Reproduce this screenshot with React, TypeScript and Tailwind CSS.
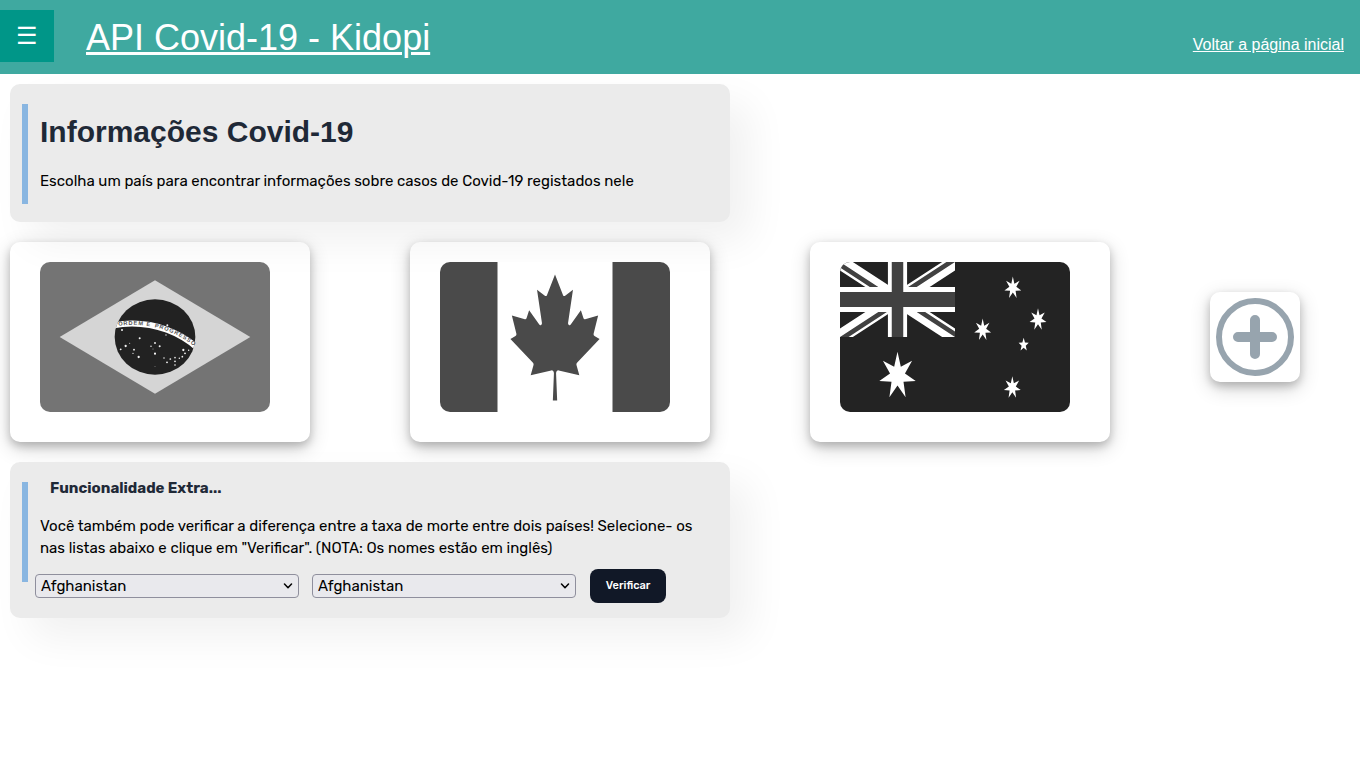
import React from "react";

const FLAG = "h-[150px] w-[230px] rounded-[10px]";

function starPoints(cx: number, cy: number, rx: number, ry: number, tips: number) {
  const points: string[] = [];
  for (let i = 0; i < tips * 2; i++) {
    const k = i % 2 === 0 ? 1 : 0.41;
    const a = (Math.PI * i) / tips;
    points.push(`${(cx + rx * k * Math.sin(a)).toFixed(1)},${(cy - ry * k * Math.cos(a)).toFixed(1)}`);
  }
  return points.join(" ");
}

const SKY: [number, number, number][] = [
  [246, 204, 3], [382, 190, 3], [378, 219, 2], [299, 229, 3], [257, 252, 3.4], [269, 244, 1.5],
  [242, 262, 2.8], [282, 263, 2.8], [279, 274, 2], [296, 285, 3.4], [345, 243, 2.8], [333, 253, 2.2],
  [359, 253, 3], [339, 261, 1.4], [345, 275, 3.2], [345, 313, 1.2], [372, 288, 2.2], [381, 301, 2.8],
  [391, 291, 2.6], [405, 287, 2.4], [405, 298, 2.6], [405, 309, 2.4], [418, 289, 2.2], [427, 284, 2.6],
  [435, 274, 2.8], [430, 264, 3.4], [446, 265, 2.2],
];

const MOTTO: [string, number][] = [
  ["O", 3], ["R", 18], ["D", 33], ["E", 48], ["M", 62],
  ["E", 86],
  ["P", 111], ["R", 125], ["O", 140], ["G", 156], ["R", 172], ["E", 187], ["S", 201], ["S", 215], ["O", 229],
];

function Brazil() {
  return (
    <svg viewBox="0 0 690 450" preserveAspectRatio="none" className={FLAG} role="img" aria-label="Brasil">
      <defs>
        <clipPath id="globe"><ellipse cx="345" cy="225" rx="121" ry="113" /></clipPath>
        <path id="motto" d="M233 192.1A279 261 0 0 1 490 278.7" />
      </defs>
      <rect width="690" height="450" fill="#747474" />
      <path d="M59 225L345 55L631 225L345 395Z" fill="#d5d5d5" />
      <ellipse cx="345" cy="225" rx="121" ry="113" fill="#222" />
      <g clipPath="url(#globe)">
        <ellipse cx="276" cy="450" rx="284.6" ry="265.2" fill="none" stroke="#fff" strokeWidth="18" />
      </g>
      <g fill="#555" fontFamily="'Liberation Sans', sans-serif" fontWeight="700" fontSize="17">
        {MOTTO.map(([letter, offset]) => (
          <text key={offset}><textPath href="#motto" startOffset={offset}>{letter}</textPath></text>
        ))}
      </g>
      {SKY.map(([x, y, r]) => <circle key={`${x}-${y}`} cx={x} cy={y} r={r} fill="#f2f2f2" />)}
    </svg>
  );
}

function Canada() {
  return (
    <svg viewBox="0 0 9600 4800" preserveAspectRatio="none" className={FLAG} role="img" aria-label="Canadá">
      <rect width="9600" height="4800" fill="#4a4a4a" />
      <path fill="#fff" d="m2400 0h4800v4800h-4800zm2490 4430-45-863a95 95 0 0 1 111-98l859 151-116-320a65 65 0 0 1 20-73l941-762-212-99a65 65 0 0 1-34-79l186-572-542 115a65 65 0 0 1-73-38l-105-247-423 454a65 65 0 0 1-111-57l204-1052-327 189a65 65 0 0 1-91-27l-332-652-332 652a65 65 0 0 1-91 27l-327-189 204 1052a65 65 0 0 1-111 57l-423-454-105 247a65 65 0 0 1-73 38l-542-115 186 572a65 65 0 0 1-34 79l-212 99 941 762a65 65 0 0 1 20 73l-116 320 859-151a95 95 0 0 1 111 98l-45 863z" />
    </svg>
  );
}

function Australia() {
  return (
    <svg viewBox="0 0 690 450" preserveAspectRatio="none" className={FLAG} role="img" aria-label="Austrália">
      <defs>
        <clipPath id="canton"><path d="M0 0H60V30H0Z" /></clipPath>
        <clipPath id="counter"><path d="M30 15H60V30ZM30 15V30H0ZM30 15H0V0ZM30 15V0H60Z" /></clipPath>
      </defs>
      <rect width="690" height="450" fill="#232323" />
      <g transform="scale(5.75 7.5)" clipPath="url(#canton)">
        <path d="M0 0L60 30M60 0L0 30" stroke="#fff" strokeWidth="6" />
        <path d="M0 0L60 30M60 0L0 30" stroke="#414141" strokeWidth="4" clipPath="url(#counter)" />
        <path d="M30 0V30M0 15H60" stroke="#fff" strokeWidth="10" />
        <path d="M30 0V30M0 15H60" stroke="#414141" strokeWidth="6" />
      </g>
      <g fill="#fff">
        <polygon points={starPoints(172.5, 341, 56, 72, 7)} />
        <polygon points={starPoints(518.5, 77.7, 26, 34, 7)} />
        <polygon points={starPoints(594, 172.7, 26, 34, 7)} />
        <polygon points={starPoints(428, 203.7, 26, 34, 7)} />
        <polygon points={starPoints(517, 376.7, 26, 34, 7)} />
        <polygon points={starPoints(551, 248.5, 16, 21, 5)} />
      </g>
    </svg>
  );
}

function Panel({ children }: { children: React.ReactNode }) {
  return (
    <section className="flex w-full max-w-[720px] items-start gap-[7px] rounded-[10px] bg-[#ebebeb] pl-3 shadow-[20px_20px_40px_rgba(0,0,0,0.06)]">
      <div className="mt-5 h-[100px] w-[6px] shrink-0 bg-[#89b6e1]" />
      <div className="min-w-0 flex-1">{children}</div>
    </section>
  );
}

const CARD_SHADOW = "shadow-[0_4px_8px_0_rgba(0,0,0,0.2),0_6px_20px_0_rgba(0,0,0,0.19)]";

function CountrySelect({ label }: { label: string }) {
  return (
    <div className="grid w-[264px] items-center">
      <select
        aria-label={label}
        className="col-start-1 row-start-1 h-6 w-full appearance-none rounded-[4px] border border-[#8f8f9d] bg-[#e9e9ed] px-[5px] text-[15px] leading-[22px] text-black"
      >
        <option>Afghanistan</option>
        <option>Australia</option>
        <option>Brazil</option>
        <option>Canada</option>
      </select>
      <svg
        viewBox="0 0 10 6"
        className="pointer-events-none col-start-1 row-start-1 mr-[6px] h-[6px] w-[10px] justify-self-end"
        fill="none"
        stroke="#000"
        strokeWidth="1.5"
        strokeLinecap="round"
        strokeLinejoin="round"
        aria-hidden="true"
      >
        <path d="M1.5 1L5 4.7L8.5 1" />
      </svg>
    </div>
  );
}

export default function App() {
  return (
    <div className="min-h-screen bg-white font-['Rubik','Roboto',sans-serif] text-[15px] leading-[22px] text-black">
      <header className="flex items-start bg-[#3fa9a0] pt-[10px] pb-2 font-['Liberation_Sans',sans-serif] text-white">
        <button type="button" aria-label="Abrir menu" className="flex h-[52px] w-[54px] items-center justify-center bg-[#009688] text-[24px] leading-[36px]">
          ☰
        </button>
        <h1 className="ml-8 text-[36px] leading-[56px] underline decoration-[3px]">API Covid-19 - Kidopi</h1>
        <a href="#inicio" className="mt-6 mr-4 ml-auto text-[16px] leading-[22px] underline">Voltar a página inicial</a>
      </header>

      <main className="flex flex-col gap-5 p-[10px]">
        <Panel>
          <div className="h-[138px] pt-[26px] pl-[5px]">
            <h2 className="font-['Liberation_Sans',sans-serif] text-[30px] leading-[44px] font-bold text-[#1f2937]">Informações Covid-19</h2>
            <p className="mt-4">Escolha um país para encontrar informações sobre casos de Covid-19 registados nele</p>
          </div>
        </Panel>

        <div className="flex items-start gap-[100px]">
          <a href="#brasil" className={`h-[200px] w-[300px] shrink-0 rounded-[10px] px-[30px] py-5 ${CARD_SHADOW}`}><Brazil /></a>
          <a href="#canada" className={`h-[200px] w-[300px] shrink-0 rounded-[10px] px-[30px] py-5 ${CARD_SHADOW}`}><Canada /></a>
          <a href="#australia" className={`h-[200px] w-[300px] shrink-0 rounded-[10px] px-[30px] py-5 ${CARD_SHADOW}`}><Australia /></a>
          <button type="button" aria-label="Mais países" className={`mt-[50px] size-[90px] shrink-0 rounded-[10px] ${CARD_SHADOW}`}>
            <svg viewBox="0 0 90 90" className="size-full" fill="none" stroke="#97a4ae" aria-hidden="true">
              <circle cx="45" cy="45" r="36" strokeWidth="6" />
              <path d="M45 28V62M28 45H62" strokeWidth="10" strokeLinecap="round" />
            </svg>
          </button>
        </div>

        <Panel>
          <h3 className="pt-[15px] pl-[15px] font-bold text-[#1f2937]">Funcionalidade Extra...</h3>
          <p className="mt-4 pr-5 pl-[5px]">
            Você também pode verificar a diferença entre a taxa de morte entre dois países! Selecione- os
            nas listas abaixo e clique em "Verificar". (NOTA: Os nomes estão em inglês)
          </p>
          <form className="mt-[10px] flex items-center pb-[15px]">
            <CountrySelect label="Primeiro país" />
            <div className="ml-[13px]"><CountrySelect label="Segundo país" /></div>
            <button type="button" className="ml-[14px] h-[34px] w-[76px] rounded-[8px] bg-[#111827] text-[11px] font-medium text-white">Verificar</button>
          </form>
        </Panel>
      </main>
    </div>
  );
}
